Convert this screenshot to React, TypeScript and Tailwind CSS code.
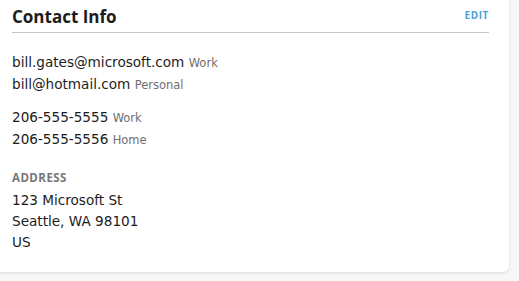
export default function App() {
  const body = { fontFamily: '"DejaVu Sans", "Open Sans", sans-serif' }
  const head = { fontFamily: '"Open Sans", "Liberation Sans", sans-serif' }

  return (
    <div className="w-[519px] h-[281px] bg-[#f7f7f7] overflow-hidden" style={body}>
      <div className="w-[509px] h-[272px] bg-white rounded-br-[6px] shadow-[0_1px_3px_rgba(0,0,0,0.12)] pl-3 pr-5 flex flex-col">
        {/* Header */}
        <div className="flex items-end justify-between h-[33px] border-b border-[#c4c4c4] pb-[7px]" style={head}>
          <h2 className="text-[17px] font-bold text-[#1c1c1c] leading-none">Contact Info</h2>
          <button className="text-[10px] font-bold tracking-[0.06em] text-[#4b9fd6] leading-none mb-[5px]">
            EDIT
          </button>
        </div>

        {/* Emails */}
        <div className="mt-[19px] text-[13.6px] text-[#1c1c1c] leading-[21px]">
          <div>
            bill.gates@microsoft.com <span className="text-[11.5px] text-[#6f6f6f]">Work</span>
          </div>
          <div>
            bill@hotmail.com <span className="text-[11.5px] text-[#6f6f6f]">Personal</span>
          </div>
        </div>

        {/* Phones */}
        <div className="mt-[11px] text-[13.6px] text-[#1c1c1c] leading-[21px]">
          <div>
            206-555-5555 <span className="text-[11.5px] text-[#6f6f6f]">Work</span>
          </div>
          <div>
            206-555-5556 <span className="text-[11.5px] text-[#6f6f6f]">Home</span>
          </div>
        </div>

        {/* Address */}
        <div className="mt-[20px]">
          <div className="text-[11.5px] font-bold text-[#777] leading-[14px] tracking-[0.04em]" style={head}>ADDRESS</div>
          <div className="mt-[5px] text-[13.6px] text-[#1c1c1c] leading-[21px]">
            <div>123 Microsoft St</div>
            <div>Seattle, WA 98101</div>
            <div>US</div>
          </div>
        </div>
      </div>
    </div>
  )
}
